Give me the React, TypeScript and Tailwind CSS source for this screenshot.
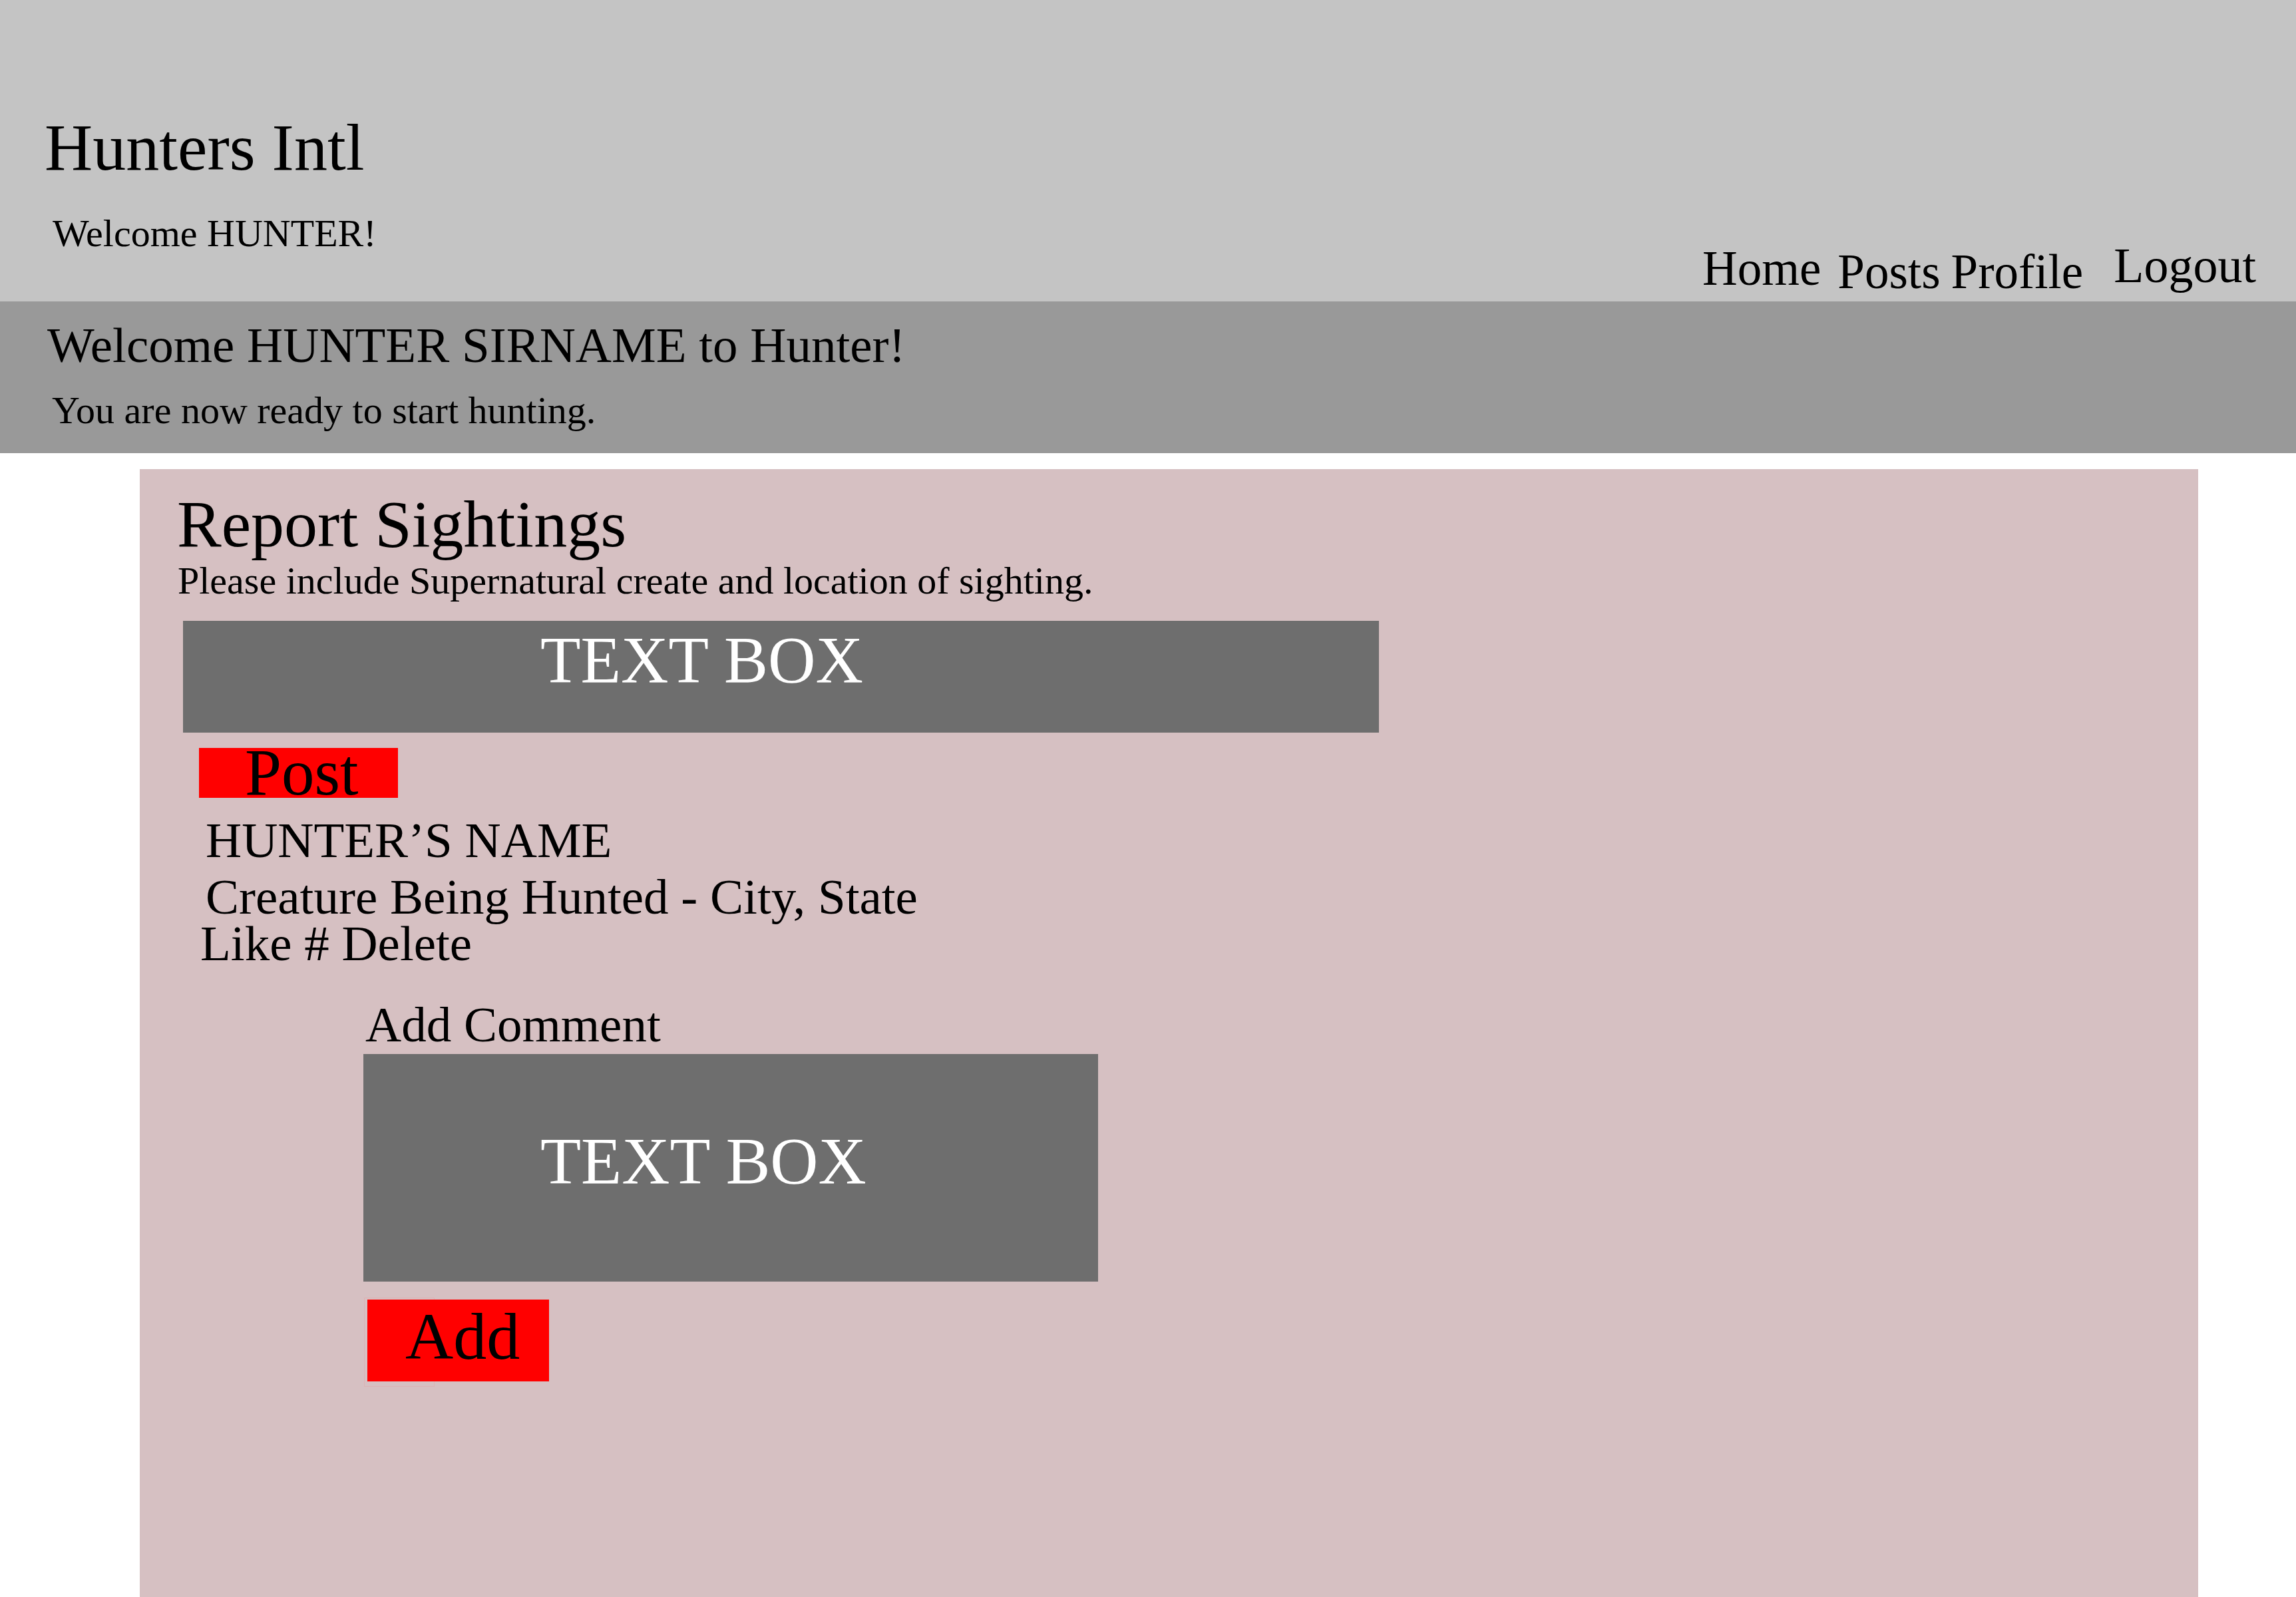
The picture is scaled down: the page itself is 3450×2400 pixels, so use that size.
export default function App() {
  return (
    <div className="min-h-screen bg-white font-['Liberation_Serif','Times_New_Roman',serif] text-black">
      {/* top bar */}
      <header className="flex h-[453px] justify-between bg-[#c4c4c4]">
        <div className="pl-[67px] pt-[172px]">
          <h1 className="text-[100px] leading-none">Hunters Intl</h1>
          <p className="ml-[12px] mt-[50px] text-[58px] leading-none">Welcome HUNTER!</p>
        </div>
        <nav className="flex items-start pr-[60px] pt-[362px] text-[73px] leading-none">
          <a className="mt-[5px]">Home</a>
          <a className="ml-[25px] mt-[10px]">Posts</a>
          <a className="ml-[16px] mt-[10px]">Profile</a>
          <a className="ml-[46px] text-[74px]">Logout</a>
        </nav>
      </header>

      {/* welcome strip */}
      <section className="h-[228px] bg-[#999999] pl-[71px] pt-[28px]">
        <h2 className="text-[75px] leading-none">Welcome HUNTER SIRNAME to Hunter!</h2>
        <p className="ml-[7px] mt-[32px] text-[58px] leading-none">You are now ready to start hunting.</p>
      </section>

      {/* report panel */}
      <main className="ml-[210px] mt-[24px] min-h-[1695px] w-[3093px] bg-[#d6c0c2] pt-[33px]">
        <h2 className="ml-[56px] text-[100px] leading-none">Report Sightings</h2>
        <p className="ml-[57px] mt-[6px] text-[58px] leading-none">
          Please include Supernatural create and location of sighting.
        </p>

        <div className="ml-[65px] mt-[31px] h-[168px] w-[1797px] bg-[#6e6e6e] pl-[537px] pt-[9px] text-[99px] leading-none text-white">
          TEXT BOX
        </div>

        <button className="ml-[89px] mt-[23px] flex h-[75px] w-[299px] items-start bg-[#ff0000] pl-[69px] text-left">
          <span className="-mt-[13px] text-[99px] leading-none">Post</span>
        </button>

        <div className="text-[75px] leading-none">
          <p className="ml-[99px] mt-[26px]">HUNTER’S NAME</p>
          <p className="ml-[99px] mt-[10px]">Creature Being Hunted - City, State</p>
          <p className="ml-[91px] -mt-[5px]">Like # Delete</p>
          <p className="ml-[339px] mt-[47px]">Add Comment</p>
        </div>

        <div className="ml-[336px] mt-[7px] h-[342px] w-[1104px] bg-[#6e6e6e] pl-[266px] pt-[111px] text-[100px] leading-none text-white">
          TEXT BOX
        </div>

        <div className="relative ml-[342px] mt-[27px] w-[273px]">
          <div className="absolute -left-[5px] -top-[3px] h-[134px] w-[106px] border border-[#dcb2b4]" />
          <button className="relative flex h-[123px] w-[273px] items-start bg-[#ff0000] pl-[57px] pt-[6px] text-left">
            <span className="text-[100px] leading-none">Add</span>
          </button>
        </div>
      </main>
    </div>
  );
}
